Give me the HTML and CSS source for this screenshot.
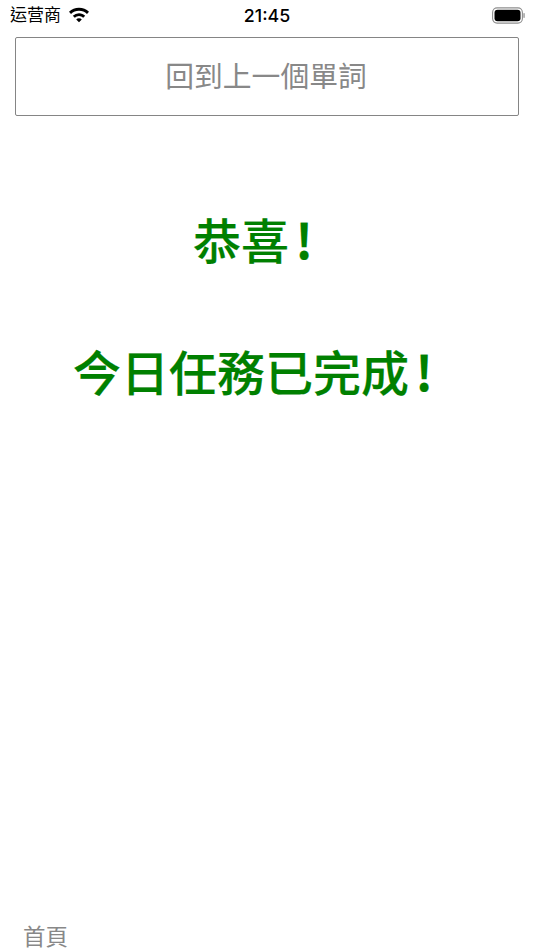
FILE: index.html
```html
<!DOCTYPE html>
<html lang="zh-Hant">
<head>
    <meta charset="UTF-8">
    <meta name="viewport" content="width=device-width, initial-scale=1.0">
    <title>今日任務</title>
    <link rel="stylesheet" href="styles.css">
</head>
<body>
    <div class="page">
        <!-- Status bar -->
        <div class="status-bar">
            <div class="status-left">
                <span class="carrier">运营商</span>
                <svg class="wifi" width="22" height="16" viewBox="0 0 22 16">
                    <path d="M11 0.800c3.900 0 7.400 1.500 10 4l-2 2.100A11.500 11.500 0 0 0 11 3.700 11.500 11.500 0 0 0 3 6.900L1 4.800a14.400 14.400 0 0 1 10-4z" fill="#000"/>
                    <path d="M11 6.200c2.400 0 4.600.9 6.200 2.500l-2 2.100A6 6 0 0 0 11 9.100a6 6 0 0 0-4.200 1.700l-2-2.100A8.900 8.900 0 0 1 11 6.200z" fill="#000"/>
                    <path d="M11 11.300c1.100 0 2.100.4 2.800 1.100L11 15.300l-2.800-2.900c.7-.7 1.700-1.100 2.800-1.100z" fill="#000"/>
                </svg>
            </div>
            <span class="time">21:45</span>
            <svg class="battery" width="33" height="17" viewBox="0 0 33 17">
                <rect x="0.600" y="0.900" width="29.800" height="15.200" rx="4.500" fill="none" stroke="#8e8e8e" stroke-width="1.100"/>
                <rect x="2.500" y="2.700" width="26" height="11.600" rx="3" fill="#000"/>
                <rect x="31.300" y="6" width="1.500" height="5" rx="0.700" fill="#a0a0a0"/>
            </svg>
        </div>

        <button class="back-button">回到上一個單詞</button>

        <div class="message">
            <h1>恭喜<span class="bang">!</span></h1>
            <h1>今日任務已完成<span class="bang">!</span></h1>
        </div>

        <div class="tab-bar">首頁</div>
    </div>
</body>
</html>
```

FILE: styles.css
```css
/* General */
body {
    margin: 0;
    background-color: #fff;
    font-family: "Noto Sans CJK TC", "Liberation Sans", sans-serif;
}

.page {
    display: flex;
    flex-direction: column;
    height: 950px;
    overflow: hidden;
}

/* Status bar */
.status-bar {
    display: flex;
    align-items: center;
    justify-content: space-between;
    height: 30px;
    padding: 0 9px 0 10px;
    flex-shrink: 0;
}

.status-left {
    display: flex;
    align-items: center;
    gap: 8px;
    width: 170px;
}

.carrier {
    margin-top: -3px;
    font-family: "Noto Sans CJK SC", sans-serif;
    font-size: 17px;
    color: #000;
}

.wifi {
    margin: -1px 0 0 -1px;
}

.time {
    margin-left: -1px;
    font-family: "Inter", sans-serif;
    font-size: 17.800px;
    font-weight: 500;
    color: #000;
}

.battery {
    margin-left: 137px;
}

/* Button */
.back-button {
    display: block;
    height: 79px;
    padding: 0 2px 4px 0;
    margin: 7px 15px 0 15px;
    border: 1.500px solid #858585;
    border-radius: 2px;
    background-color: #fff;
    color: #888;
    font-family: inherit;
    font-size: 28.800px;
    flex-shrink: 0;
}

/* Message */
.message {
    flex: 1;
    padding: 87px 28px 0 0;
    text-align: center;
}

.message h1 {
    margin: 0 0 62px;
    font-size: 48px;
    line-height: 70px;
    font-weight: 500;
    color: #008000;
    -webkit-text-stroke: 0.200px #008000;
}

.bang {
    margin-left: 6px;
    font-weight: 700;
}

/* Bottom */
.tab-bar {
    height: 29px;
    padding-left: 23px;
    font-size: 22.500px;
    line-height: 29px;
    color: #888;
    flex-shrink: 0;
}
```
